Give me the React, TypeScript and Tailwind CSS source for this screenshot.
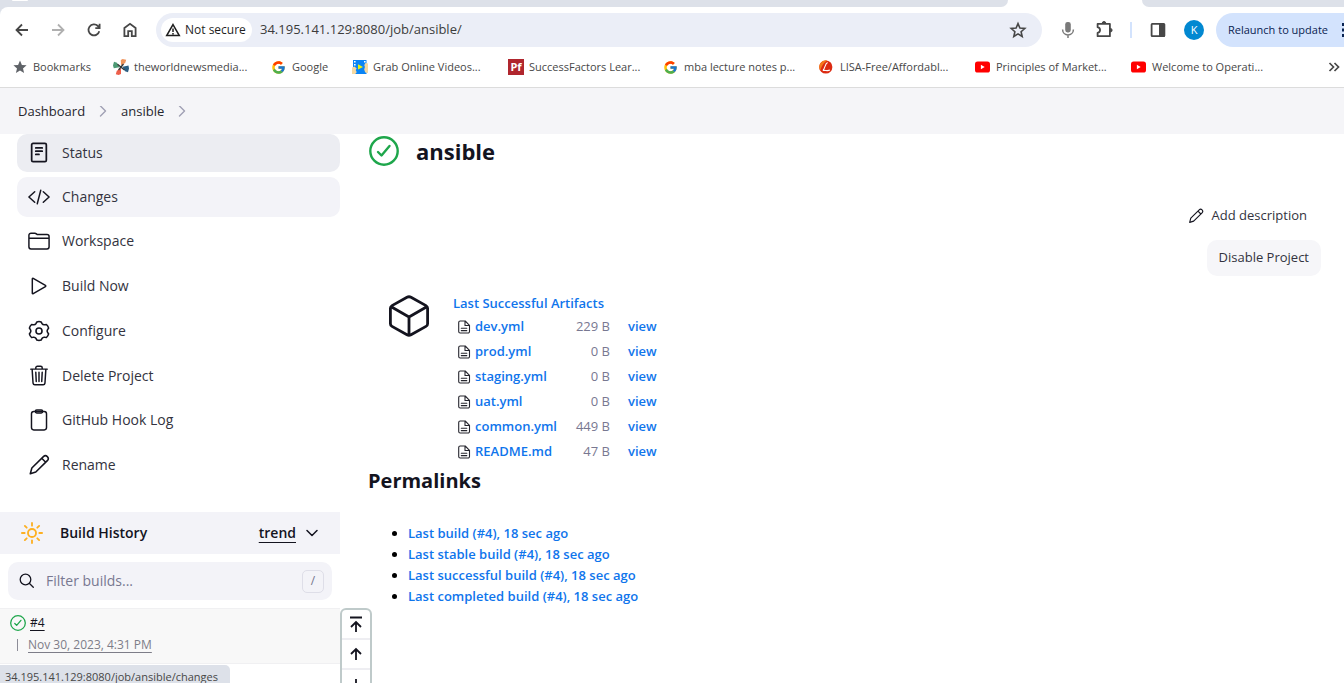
import type { ReactNode } from "react";
import { FcGoogle } from "react-icons/fc";

type IconProps = { className?: string; children?: ReactNode };

function Line({ className, children, w = 2, box = "0 0 24 24" }: IconProps & { w?: number; box?: string }) {
  return (
    <svg viewBox={box} className={className} fill="none" stroke="currentColor" strokeWidth={w} strokeLinecap="round" strokeLinejoin="round" aria-hidden="true">
      {children}
    </svg>
  );
}

/* ---------- favicons ---------- */

const YouTube = () => (
  <svg viewBox="0 0 16 16" className="size-4 shrink-0" aria-hidden="true">
    <rect x="0" y="2.5" width="15" height="11" rx="2.6" fill="#f00" />
    <path d="M5.900 5.800v4.400L9.700 8z" fill="#fff" />
  </svg>
);

const Pinwheel = () => (
  <svg viewBox="0 0 16 16" className="size-4 shrink-0" aria-hidden="true">
    <path d="M8 6.500 7.800 1 9.500 0 13.200.8 12.200 4z" fill="#f0945c" />
    <path d="M9.500 7.800 15.500 6.500 16 9.500 15 13.200 12 12.200z" fill="#2c5f83" />
    <path d="M8 9.200V15L5.600 16 2.800 15.200 3.800 11.800z" fill="#ee5f4b" />
    <path d="M6.500 8.200.8 9.300 0 6.500 1 2.800 4 3.800z" fill="#4c9a74" />
    <path d="M4.500 5.200 11.500 11M10.500 5 5.500 11" stroke="#333" strokeWidth="1.300" />
  </svg>
);

const Film = () => (
  <svg viewBox="0 0 16 16" className="size-4 shrink-0" aria-hidden="true">
    <rect x="1" y="1" width="13.5" height="14" fill="#0a84f5" />
    <path d="M2 2h1.600v1.600H2zM2 5h1.600v1.600H2zM12 2h1.600v1.600H12z" fill="#fff" />
    <path d="M0 8.500l2.500-1 2.200 2-1 1.500 1 2.200-1.500 1.800H0zM16 4.500l-2.500-.5-1.200 2 .6 2-.7 2.500 1 3 2.800.5z" fill="#f6d9a0" />
    <path d="M6 5.300v5.200l5-2.600z" fill="#e9f50a" />
  </svg>
);

const Lisa = () => (
  <svg viewBox="0 0 16 16" className="size-4 shrink-0" aria-hidden="true">
    <circle cx="6.800" cy="8" r="6.600" fill="#dc2b12" />
    <path d="M1.300 11.500A6.500 6.500 0 0 1 8.300 1.600C4.300 4 2.800 7 1.300 11.500z" fill="#f57a1c" />
    <path d="M8.600 3.600C5.800 4.800 6.100 9.500 3.900 11.600c2-.8 4.400.9 7-.5" stroke="#fff" strokeWidth="1.100" fill="none" />
  </svg>
);

const Pf = () => (
  <span className="flex size-4 shrink-0 items-center justify-center bg-[#b0262e] text-[11px] leading-4 font-bold text-white">Pf</span>
);

const StarSolid = () => (
  <svg viewBox="0 0 16 16" className="size-4 shrink-0" aria-hidden="true">
    <path d="M8 1.600l1.900 4.300 4.700.4-3.600 3.100 1.100 4.600L8 11.600 3.900 14 5 9.400 1.400 6.300l4.700-.4z" fill="#5f6368" />
  </svg>
);

const bookmarks: { label: string; icon: ReactNode; width: string }[] = [
  { label: "Bookmarks", icon: <StarSolid />, width: "w-[60px]" },
  { label: "theworldnewsmedia...", icon: <Pinwheel />, width: "w-[117px]" },
  { label: "Google", icon: <FcGoogle className="size-[15px] shrink-0" />, width: "w-[40px]" },
  { label: "Grab Online Videos...", icon: <Film />, width: "w-[115px]" },
  { label: "SuccessFactors Lear...", icon: <Pf />, width: "w-[114px]" },
  { label: "mba lecture notes p...", icon: <FcGoogle className="size-[15px] shrink-0" />, width: "w-[115px]" },
  { label: "LISA-Free/Affordabl...", icon: <Lisa />, width: "w-[115px]" },
  { label: "Principles of Market...", icon: <YouTube />, width: "w-[115px]" },
  { label: "Welcome to Operati...", icon: <YouTube />, width: "w-[117px]" },
];

function Browser() {
  return (
    <header className="shrink-0 bg-white text-[#474747]">
      <div className="flex h-[7px] bg-white">
        <div className="flex-1 rounded-br-lg bg-[#dde1e9] pl-3">
          <div className="h-px w-4 rounded-b-full bg-white" />
        </div>
        <div className="w-[134px]" />
        <div className="w-[202px] rounded-bl-lg bg-[#dde1e9]" />
      </div>
      <div className="bg-[#dde1e9]">
        <div className="flex h-[46px] items-center gap-4 overflow-hidden rounded-tl-lg bg-white pl-3">
          <button aria-label="Back" className="shrink-0">
            <Line className="size-5" box="0 0 20 20" w={1.8}>
              <path d="M16 10H5M10 4.500 4.500 10l5.500 5.500" strokeLinecap="butt" strokeLinejoin="miter" />
            </Line>
          </button>
          <button aria-label="Forward" className="shrink-0 text-[#b0b0b0]">
            <Line className="size-5" box="0 0 20 20" w={1.8}>
              <path d="M4 10h11M10 4.500l5.500 5.500-5.500 5.500" strokeLinecap="butt" strokeLinejoin="miter" />
            </Line>
          </button>
          <button aria-label="Reload" className="shrink-0">
            <Line className="size-5" box="0 0 20 20" w={1.8}>
              <path d="M15.300 11.300A5.500 5.500 0 1 1 13.900 6L15.500 7.500M15.600 3.800v4.300h-4.300" strokeLinecap="butt" strokeLinejoin="miter" />
            </Line>
          </button>
          <button aria-label="Home" className="shrink-0">
            <Line className="size-5" box="0 0 20 20" w={1.8}>
              <path d="M4.400 16.100V8L10 3.800 15.600 8v8.100h-3.800v-5H8.200v5z" strokeLinejoin="miter" />
            </Line>
          </button>
          <div className="flex h-[34px] min-w-0 flex-1 items-center gap-2 rounded-full bg-[#ebeef7] pr-[14px] pl-[5px]">
            <button className="flex h-6 w-[91px] shrink-0 items-center gap-1 rounded-full bg-white pl-1 text-xs font-medium whitespace-nowrap text-[#1f1f1f]">
              <Line className="size-4 shrink-0" box="0 0 16 16" w={1.5}>
                <path d="M8 2.600 14.300 13.600H1.700zM8 6.500v3.400M8 11.100v1.300" strokeLinecap="butt" strokeLinejoin="miter" />
              </Line>
              Not secure
            </button>
            <input aria-label="Address" defaultValue="34.195.141.129:8080/job/ansible/" className="min-w-0 flex-1 bg-transparent text-[13px] text-[#3c3c3c] outline-none" />
            <button aria-label="Bookmark this page" className="shrink-0">
              <Line className="size-5" box="0 0 20 20" w={1.6}>
                <path d="M10 3.600l1.900 4.500 4.900.4-3.700 3.200 1.100 4.800L10 13.900l-4.200 2.600 1.100-4.800L3.200 8.500l4.900-.4z" strokeLinejoin="miter" />
              </Line>
            </button>
          </div>
          <button aria-label="Microphone" className="shrink-0 text-[#7a7a7a]">
            <svg viewBox="0 0 20 20" className="size-5" aria-hidden="true">
              <rect x="7.200" y="2" width="5.600" height="10.500" rx="2.400" fill="currentColor" />
              <path d="M4.600 9.500c0 7.200 10.800 7.200 10.800 0M10 15v3" stroke="currentColor" strokeWidth="1.500" fill="none" />
            </svg>
          </button>
          <button aria-label="Extensions" className="shrink-0">
            <svg viewBox="0 0 20 20" className="size-5" aria-hidden="true">
              <path d="M3.600 3.900h12.300v12.300H3.600v-3.300c3.300-.7 3.300-4.900 0-5.700z" fill="none" stroke="currentColor" strokeWidth="1.800" strokeLinejoin="round" />
              <path d="M8.200 3.300a1.800 1.800 0 0 1 3.600 0zM16.300 8.400a1.800 1.800 0 0 1 0 3.600z" fill="currentColor" stroke="currentColor" />
            </svg>
          </button>
          <div className="h-4 w-0.5 shrink-0 bg-[#d3e3fd]" />
          <button aria-label="Side panel" className="shrink-0">
            <svg viewBox="0 0 20 20" className="size-5" aria-hidden="true">
              <rect x="3.600" y="3.900" width="12.800" height="12.200" rx="0.600" fill="none" stroke="currentColor" strokeWidth="1.800" />
              <path d="M11 4h6v12.500h-6z" fill="currentColor" />
            </svg>
          </button>
          <button className="flex size-5 shrink-0 items-center justify-center rounded-full bg-[#0288d1] text-[11px] text-white">K</button>
          <button className="-ml-1 flex h-[34px] w-32 shrink-0 items-center justify-between overflow-hidden rounded-l-full bg-[#d3e3fd] pl-3 text-[11px] font-medium whitespace-nowrap text-[#0a2351]">
            Relaunch to update
            <svg viewBox="0 0 3 16" className="h-4 w-[3px] shrink-0" aria-hidden="true">
              <path d="M1 1h2v3H1zM1 6.500h2v3H1zM1 12h2v3H1z" fill="currentColor" />
            </svg>
          </button>
        </div>
      </div>
      <nav aria-label="Bookmarks" className="flex h-[35px] items-center gap-5 overflow-hidden border-b border-[#dcdcdc] pr-1 pb-1.5 pl-3">
        {bookmarks.map((b) => (
          <a key={b.label} href="#" className="flex shrink-0 items-center gap-[5px] text-[11px] whitespace-nowrap">
            <span className="flex w-4 items-center">{b.icon}</span>
            <span className={b.width}>{b.label}</span>
          </a>
        ))}
        <button aria-label="More bookmarks" className="ml-auto shrink-0">
          <Line className="size-3" box="0 0 12 12" w={1.7}>
            <path d="M1.500 2l4 4-4 4M6.500 2l4 4-4 4" strokeLinecap="butt" strokeLinejoin="miter" />
          </Line>
        </button>
      </nav>
    </header>
  );
}

/* ---------- side panel ---------- */

const Pencil = ({ className }: IconProps) => (
  <Line className={className} w={1.7}>
    <path d="M2.500 21.500l1.700-6.200L16.800 2.900a3 3 0 0 1 4.300 4.300L8.500 19.700zM15 4.700l4.300 4.300" />
  </Line>
);

const tasks: { label: string; icon: ReactNode; look: string }[] = [
  {
    label: "Status",
    look: "h-[38px] bg-[#ecedf2]",
    icon: (
      <Line className="size-[22px]" w={1.9}>
        <rect x="4" y="1.500" width="16" height="20" rx="1.500" />
        <path d="M8.500 6.500h7M8.500 10h7M8.500 13.500h3.500" />
      </Line>
    ),
  },
  {
    label: "Changes",
    look: "h-10 bg-[#f3f3f8]",
    icon: (
      <Line className="size-[22px]" w={1.6}>
        <path d="M7.300 6.200 1 12l6.300 5.800M16.700 6.200 23 12l-6.300 5.800M13.900 4.700 10.100 19.300" />
      </Line>
    ),
  },
  {
    label: "Workspace",
    look: "h-10",
    icon: (
      <Line className="size-[22px]" w={1.6}>
        <path d="M1 8.500V5.800a2.300 2.300 0 0 1 2.300-2.300h4.200c1.500 0 1.800 1.500 3.300 1.500h9.900A2.300 2.300 0 0 1 23 7.300V18.400a2.300 2.300 0 0 1-2.300 2.300H3.300A2.300 2.300 0 0 1 1 18.400zM1 9h22" />
      </Line>
    ),
  },
  {
    label: "Build Now",
    look: "h-10",
    icon: (
      <Line className="size-[22px]" w={1.6}>
        <path d="M4.700 4.200v15.600c0 .6.500.9 1 .6L19 12.600c.5-.3.500-.9 0-1.200L5.700 3.600c-.5-.3-1 0-1 .6z" />
      </Line>
    ),
  },
  {
    label: "Configure",
    look: "h-10",
    icon: (
      <Line className="size-[22px]" w={1.7}>
        <circle cx="12" cy="12" r="3.300" />
        <path d="M9.700 2.100c1.500-.6 3.100-.6 4.600 0l.9 1.700c.8 1.200 2.100 1.700 3.400 1.300l1.500-.2c1.200 1 2 2.300 2.400 3.900l-1.100 1.600c-.7 1-.7 2.200 0 3.200l1.100 1.600c-.4 1.600-1.200 2.900-2.400 3.900l-1.500-.2c-1.300-.4-2.600.1-3.400 1.300l-.9 1.700c-1.500.6-3.100.6-4.600 0l-.9-1.700c-.8-1.200-2.100-1.700-3.400-1.300l-1.500.2c-1.200-1-2-2.300-2.400-3.900l1.100-1.600c.7-1 .7-2.200 0-3.200L1.500 8.800c.4-1.600 1.200-2.900 2.400-3.900l1.500.2c1.300.4 2.600-.1 3.400-1.300z" />
      </Line>
    ),
  },
  {
    label: "Delete Project",
    look: "h-10",
    icon: (
      <Line className="size-[22px]" w={1.6}>
        <path d="M3 4.500h18M4.500 4.500l1 15.200a2 2 0 0 0 2 1.800h9a2 2 0 0 0 2-1.800l1-15.200M8.500 4.500V3a1.700 1.700 0 0 1 1.700-1.700h3.600A1.700 1.700 0 0 1 15.500 3v1.500M8.500 8l.5 10M12 8v10M15.500 8 15 18" />
      </Line>
    ),
  },
  {
    label: "GitHub Hook Log",
    look: "h-10",
    icon: (
      <Line className="size-[22px]" w={1.6}>
        <rect x="3.800" y="2.800" width="16.400" height="20" rx="2.500" />
        <rect x="8" y="1" width="8" height="3.300" rx="1.500" />
      </Line>
    ),
  },
  { label: "Rename", look: "h-10", icon: <Pencil className="size-[22px]" /> },
];

const Check = ({ className, w }: IconProps & { w: number }) => (
  <Line className={className} w={w} box="0 0 30 30">
    <circle cx="15" cy="15" r="13.700" />
    <path d="M9 16l3.500 3.500L20.500 10" />
  </Line>
);

function SidePanel() {
  return (
    <aside className="flex w-[340px] shrink-0 flex-col">
      <nav aria-label="Project" className="ml-[17px] flex h-[351px] flex-col justify-between">
        {tasks.map((t) => (
          <a key={t.label} href="#" className={`flex items-center gap-3 rounded-[10px] pl-[11px] text-sm font-medium text-[#333340] ${t.look}`}>
            <span className="text-[#14141f]">{t.icon}</span>
            {t.label}
          </a>
        ))}
      </nav>
      <section className="mt-[27px]">
        <div className="flex h-[42px] items-center bg-[#f3f3f8] pr-[22px] pl-[21px] text-sm font-semibold text-[#14141f]">
          <Line className="size-[22px] text-[#fdb022]" w={2}>
            <circle cx="12" cy="12" r="4.400" />
            <path d="M12 1v3M12 20v3M1 12h3M20 12h3M4.200 4.200l2 2M17.800 17.800l2 2M4.200 19.800l2-2M17.800 6.200l2-2" />
          </Line>
          <h2 className="ml-[17px] flex-1">Build History</h2>
          <a href="#" className="underline underline-offset-4">trend</a>
          <Line className="ml-[10px] size-3" box="0 0 12 12" w={1.5}>
            <path d="M1 3.500l5 5 5-5" />
          </Line>
        </div>
        <div className="mx-2 mt-2 flex h-[38px] items-center rounded-[10px] bg-[#f3f3f8] pr-2 pl-[11px]">
          <Line className="size-4 shrink-0 text-[#14141f]" box="0 0 16 16" w={1.3}>
            <circle cx="6.500" cy="6.500" r="5.300" />
            <path d="M10.500 10.500 14.300 14.300" />
          </Line>
          <input aria-label="Filter builds" placeholder="Filter builds..." className="ml-[11px] min-w-0 flex-1 bg-transparent text-sm font-medium outline-none placeholder:text-[#787891]" />
          <kbd className="flex h-[23px] w-[22px] shrink-0 items-center justify-center rounded-[5px] border border-[#dedee8] font-['Open_Sans','Noto_Sans',sans-serif] text-xs text-[#73738c]">/</kbd>
        </div>
        <div className="mt-2 h-[56px] border-y border-[#f0f0f2] bg-[#f8f8f8] px-[10px] pt-1 text-xs">
          <div className="flex h-5 items-center gap-1">
            <Check className="size-4 text-[#1ea64b]" w={2.4} />
            <a href="#" className="text-[#14141f] underline underline-offset-3">#4</a>
          </div>
          <div className="mt-0.5 flex h-5 items-center gap-[10px] pl-[7px] text-[#7d7d88]">
            <span className="h-3 w-px bg-[#8d8d98]" />
            <a href="#" className="underline underline-offset-3">Nov 30, 2023, 4:31 PM</a>
          </div>
        </div>
      </section>
    </aside>
  );
}

/* ---------- main panel ---------- */

const files = [
  ["dev.yml", "229 B"],
  ["prod.yml", "0 B"],
  ["staging.yml", "0 B"],
  ["uat.yml", "0 B"],
  ["common.yml", "449 B"],
  ["README.md", "47 B"],
];

const permalinks = [
  "Last build (#4), 18 sec ago",
  "Last stable build (#4), 18 sec ago",
  "Last successful build (#4), 18 sec ago",
  "Last completed build (#4), 18 sec ago",
];

function MainPanel() {
  return (
    <main className="min-w-0 flex-1 pr-[23px] pl-7">
      <div className="flex h-[34px] items-center gap-[17px] pl-px">
        <Check className="size-[30px] text-[#1ea64b]" w={2.4} />
        <h1 className="text-[22px] leading-8 font-bold text-[#14141f]">ansible</h1>
      </div>
      <div className="mt-[30px] flex flex-col items-end gap-[6px] text-[13px] font-medium text-[#333340]">
        <button className="flex h-9 items-center gap-2 pr-[14px]">
          <Pencil className="size-4 text-[#14141f]" />
          Add description
        </button>
        <button className="h-9 rounded-[10px] bg-[#f6f6f9] px-3">Disable Project</button>
      </div>
      <div className="mt-4 flex items-start gap-[23px] pl-5">
        <Line className="mt-[3px] size-[42px] shrink-0 text-[#14141f]" box="0 0 42 42" w={2.8}>
          <path d="M19 2.300 4 10.600a3.200 3.200 0 0 0-1.600 2.800v15.200A3.200 3.200 0 0 0 4 31.400L19 39.800a4 4 0 0 0 4 0l15-8.400a3.200 3.200 0 0 0 1.600-2.800V13.400A3.200 3.200 0 0 0 38 10.600L23 2.300a4 4 0 0 0-4 0zM3.200 11.800 21 22l17.800-10.200M21 22v18" />
        </Line>
        <div className="pt-px text-[13px] leading-5">
          <a href="#" className="font-semibold text-[#0f75ec]">Last Successful Artifacts</a>
          <table className="border-collapse">
            <tbody>
              {files.map(([name, size]) => (
                <tr key={name} className="h-[25px]">
                  <td className="w-[22px] p-0 pt-[3px] pl-1 align-middle">
                    <Line className="size-[14px] text-[#26262e]" box="0 0 14 14" w={1.1}>
                      <path d="M3.200 1h5L12.500 5.300v6.200a1.500 1.500 0 0 1-1.500 1.500H3.200a1.500 1.500 0 0 1-1.500-1.500V2.500A1.500 1.500 0 0 1 3.200 1zM8 1v4.500h4.500M4.300 8.200h5.500M4.300 10.600h5.500" />
                    </Line>
                  </td>
                  <td className="p-0 pr-[19px] font-semibold text-[#0f75ec]"><a href="#">{name}</a></td>
                  <td className="p-0 text-right text-[#787891]">{size}</td>
                  <td className="p-0 pl-[18px] font-semibold text-[#0f75ec]"><a href="#">view</a></td>
                </tr>
              ))}
            </tbody>
          </table>
        </div>
      </div>
      <h2 className="text-xl leading-9 font-bold text-[#14141f]">Permalinks</h2>
      <ul className="mt-6 list-disc pl-10 text-[13px] leading-[21px]">
        {permalinks.map((p) => (
          <li key={p}><a href="#" className="font-semibold text-[#0f75ec]">{p}</a></li>
        ))}
      </ul>
    </main>
  );
}

const Crumb = ({ children }: IconProps) => (
  <>
    <a href="#">{children}</a>
    <Line className="size-3 text-[#a0a0b4]" box="0 0 12 12" w={1.4}>
      <path d="M3.500 0l5 5-5 5" />
    </Line>
  </>
);

export default function App() {
  return (
    <div className="relative flex h-screen flex-col overflow-hidden bg-white font-['Open_Sans','Noto_Sans',sans-serif]">
      <Browser />
      <nav aria-label="Breadcrumb" className="flex h-[46px] shrink-0 items-center gap-3 bg-[#f5f5f8] pt-0.5 pl-[18px] text-[13px] font-medium text-[#26262e]">
        <Crumb>Dashboard</Crumb>
        <Crumb>ansible</Crumb>
      </nav>
      <div className="flex min-h-0 flex-1">
        <SidePanel />
        <MainPanel />
      </div>
      <div className="absolute top-[608px] left-[340px] w-8 divide-y-2 divide-[#eeeef2] rounded-[6px] border-2 border-[#bfcaca] bg-white text-[#14141f]">
        <button aria-label="Scroll to top" className="flex h-[30px] w-full items-center justify-center">
          <Line className="size-4" box="0 0 16 16" w={1.8}>
            <path d="M2 1.500h12M8 16V6M3 11l5-5 5 5" strokeLinecap="butt" strokeLinejoin="miter" />
          </Line>
        </button>
        <button aria-label="Scroll up" className="flex h-[30px] w-full items-center justify-center">
          <Line className="size-4" box="0 0 16 16" w={1.8}>
            <path d="M8 14V3M3 8l5-5 5 5" strokeLinecap="butt" strokeLinejoin="miter" />
          </Line>
        </button>
        <button aria-label="Scroll down" className="flex h-[30px] w-full items-center justify-center">
          <Line className="size-4" box="0 0 16 16" w={1.8}>
            <path d="M8 2v11M3 8l5 5 5-5" strokeLinecap="butt" strokeLinejoin="miter" />
          </Line>
        </button>
      </div>
      <div className="absolute bottom-0 left-0 h-[18px] rounded-tr-[5px] bg-[#dde1e9] pt-1 pr-3 pl-[5px] text-[11px] leading-4 whitespace-nowrap text-[#474747]">
        34.195.141.129:8080/job/ansible/changes
      </div>
    </div>
  );
}
